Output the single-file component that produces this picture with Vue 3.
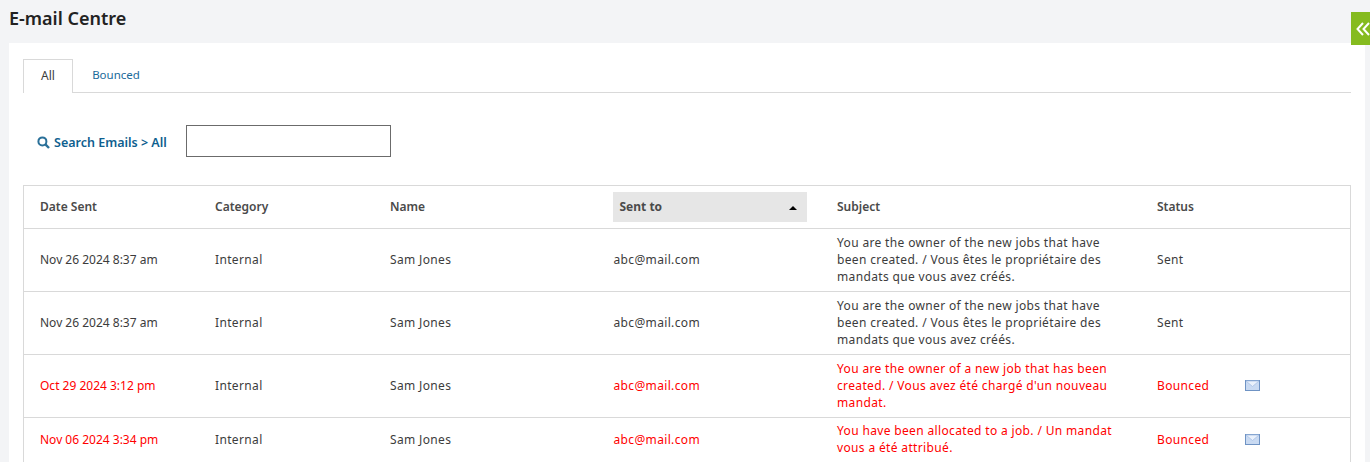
<script setup>
const owner = 'You are the owner of the new jobs that have been created. / Vous êtes le propriétaire des mandats que vous avez créés.'
const rows = [
  { date: 'Nov 26 2024 8:37 am', subject: owner, status: 'Sent', bounced: false, cls: 'tall' },
  { date: 'Nov 26 2024 8:37 am', subject: owner, status: 'Sent', bounced: false, cls: 'tall' },
  { date: 'Oct 29 2024 3:12 pm', subject: 'You are the owner of a new job that has been created. / Vous avez été chargé d\'un nouveau mandat.', status: 'Bounced', bounced: true, cls: 'tall' },
  { date: 'Nov 06 2024 3:34 pm', subject: 'You have been allocated to a job. / Un mandat vous a été attribué.', status: 'Bounced', bounced: true, cls: 'short' },
]
</script>

<template>
  <div class="page">
    <h1 class="title">E-mail Centre</h1>
    <button class="collapse" aria-label="Collapse">
      <svg width="14" height="14" viewBox="0 0 14 14" fill="none" stroke="#fff" stroke-width="2">
        <path d="M7 1 L1.5 7 L7 13" />
        <path d="M13 1 L7.5 7 L13 13" />
      </svg>
    </button>
    <main class="panel">
      <nav class="tabs">
        <span class="tab active">All</span>
        <span class="tab">Bounced</span>
      </nav>
      <div class="search">
        <svg class="lens" width="13" height="13" viewBox="0 0 13 13" fill="none" stroke="#2a7099" stroke-width="2">
          <circle cx="5.4" cy="5.4" r="4" />
          <path d="M8.4 8.4 L12 12" stroke-width="2.4" />
        </svg>
        <span class="search-label">Search Emails &gt; All</span>
        <input class="search-input" type="text" />
      </div>
      <table class="grid">
        <colgroup>
          <col class="c1" /><col class="c2" /><col class="c3" /><col class="c4" /><col class="c5" /><col class="c6" /><col />
        </colgroup>
        <thead>
          <tr>
            <th>Date Sent</th>
            <th>Category</th>
            <th>Name</th>
            <th class="sorted-cell">
              <div class="sorted">Sent to<span class="caret"></span></div>
            </th>
            <th>Subject</th>
            <th>Status</th>
            <th></th>
          </tr>
        </thead>
        <tbody>
          <tr v-for="(r, i) in rows" :key="i" :class="r.cls">
            <td class="date" :class="{ red: r.bounced }">{{ r.date }}</td>
            <td>Internal</td>
            <td>Sam Jones</td>
            <td :class="{ red: r.bounced }">abc@mail.com</td>
            <td :class="{ red: r.bounced }"><div class="subject">{{ r.subject }}</div></td>
            <td :class="{ red: r.bounced }">{{ r.status }}</td>
            <td class="icon-cell">
              <svg v-if="r.bounced" width="15" height="11" viewBox="0 0 15 11">
                <rect x="0.5" y="0.5" width="14" height="10" fill="#c9daf2" stroke="#6f93c4" />
                <path d="M1 1 L7.5 6.5 L14 1 Z" fill="#eaf1fb" stroke="#a9c1e4" stroke-width="0.8" />
              </svg>
            </td>
          </tr>
        </tbody>
      </table>
    </main>
  </div>
</template>

<style>
html, body { margin: 0; background: #f3f4f6; overflow: hidden; }
</style>

<style scoped>
.page {
  position: relative;
  height: 462px;
  overflow: hidden;
  background: #f3f4f6;
  font-family: "Noto Sans", "Open Sans", sans-serif;
  font-size: 12px;
  color: #3c3c3c;
}
.title {
  margin: 0;
  height: 43px;
  box-sizing: border-box;
  padding: 7px 0 0 9px;
  font-size: 18px;
  line-height: 23px;
  font-weight: 600;
  color: #222;
}
.collapse {
  position: absolute;
  top: 12px;
  right: 0;
  width: 19px;
  height: 33px;
  padding: 0 0 0 5px;
  border: 0;
  background: #85bb1f;
  display: flex;
  align-items: center;
  justify-content: flex-start;
}
.panel {
  margin: 0 5px 0 9px;
  padding: 16px 14px 0;
  background: #fff;
  height: 419px;
  box-sizing: border-box;
}
.tabs {
  display: flex;
  height: 34px;
  box-sizing: border-box;
  border-bottom: 1px solid #d9d9d9;
}
.tab {
  width: 50px;
  height: 34px;
  box-sizing: border-box;
  padding-top: 1px;
  line-height: 30px;
  font-size: 11.5px;
  text-align: center;
  color: #1a6a9a;
  margin-left: 18px;
  white-space: nowrap;
}
.tab.active {
  margin-left: 0;
  font-size: 12px;
  color: #3c3c3c;
  background: #fff;
  border: 1px solid #d9d9d9;
  border-bottom: 0;
}
.search {
  display: flex;
  align-items: center;
  height: 32px;
  margin: 32px 0 28px 14px;
}
.lens { flex: none; margin-top: 3px; }
.search-label {
  margin-left: 4px;
  padding-top: 2px;
  font-size: 12.5px;
  font-weight: 600;
  color: #0f5f8f;
}
.search-input {
  margin-left: 19px;
  width: 205px;
  height: 32px;
  box-sizing: border-box;
  border: 1px solid #6b6b6b;
  background: #fff;
  padding: 0;
}
.grid {
  width: 1328px;
  table-layout: fixed;
  border-collapse: collapse;
  border: 1px solid #d9d9d9;
}
.c1 { width: 175.5px; }
.c2 { width: 175px; }
.c3 { width: 238.5px; }
.c4 { width: 208.5px; }
.c5 { width: 320px; }
.c6 { width: 88px; }
th {
  height: 43px;
  padding: 0 0 2px 16px;
  box-sizing: border-box;
  text-align: left;
  font-weight: 600;
  color: #4a4a4a;
  border-bottom: 1px solid #d9d9d9;
}
th.sorted-cell { padding: 0; }
.sorted {
  position: relative;
  width: 194px;
  height: 30px;
  box-sizing: border-box;
  padding-left: 7px;
  line-height: 30px;
  background: #e6e6e6;
  font-weight: 700;
}
.caret {
  position: absolute;
  right: 10px;
  top: 14px;
  border-left: 4px solid transparent;
  border-right: 4px solid transparent;
  border-bottom: 4px solid #000;
}
td {
  padding: 0 0 2px 16px;
  box-sizing: border-box;
  border-bottom: 1px solid #d9d9d9;
  line-height: 17px;
  letter-spacing: 0.35px;
  vertical-align: middle;
  white-space: nowrap;
}
td.date { letter-spacing: 0; }
td:nth-child(4) { padding-left: 1px; }
tr.tall td { height: 63px; }
tr.short td { height: 45px; }
td.red { color: #f00; }
.subject { width: 280px; white-space: normal; }
.icon-cell svg { display: block; }
</style>
